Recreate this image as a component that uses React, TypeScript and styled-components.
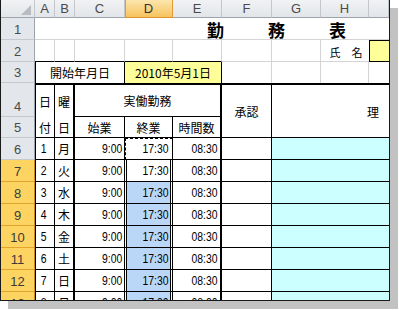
import React from 'react';
import styled, { createGlobalStyle, css } from 'styled-components';

const Global = createGlobalStyle`
  html, body { margin: 0; padding: 0; background: #fff; }
  body { width: 399px; height: 310px; overflow: hidden; font-family: "Noto Sans CJK JP", sans-serif; }
`;

const Frame = styled.div`
  width: 390px;
  height: 301px;
  box-sizing: border-box;
  border: 1px solid #1a1a1a;
  border-top: none;
  box-shadow: 8px 8px 0 #c2c2c2;
  overflow: hidden;
  background: #fff;
`;

const Sheet = styled.div`
  display: grid;
  grid-template-columns: 34px 20px 20px 50px 48px 49px 50px 49px 48px 20px;
  grid-template-rows: 18px 22px 22px 21px 34px 21px repeat(8, 22px);
`;

const Corner = styled.div`
  box-sizing: border-box;
  display: flex;
  align-items: flex-end;
  justify-content: flex-end;
  padding: 0 3px 2px 0;
  background: linear-gradient(#f1f2f4, #e2e5e9);
  border-right: 1px solid #c3c7cc;
  border-bottom: 1px solid #9da3aa;
`;

const CornerMark = styled.div`
  width: 0;
  height: 0;
  border-left: 10px solid transparent;
  border-bottom: 10px solid #b8bcc2;
`;

const ColHead = styled.div<{ $sel?: boolean }>`
  box-sizing: border-box;
  display: flex;
  align-items: center;
  justify-content: center;
  font: 13px "Liberation Sans", sans-serif;
  color: #4a4a4a;
  background: linear-gradient(#f1f2f4, #e2e5e9);
  border-right: 1px solid #c3c7cc;
  border-bottom: 1px solid #9da3aa;
  ${(p) =>
    p.$sel &&
    css`
      background: linear-gradient(#fce6ad, #f6c35e);
      border-right-color: #e39a36;
      border-bottom-color: #e0922a;
      box-shadow: inset 1px 0 0 #e39a36;
      color: #333;
    `}
`;

const RowHead = styled.div<{ $sel?: boolean }>`
  box-sizing: border-box;
  display: flex;
  align-items: flex-end;
  justify-content: center;
  padding-bottom: 3px;
  font: 13px "Liberation Sans", sans-serif;
  line-height: 13px;
  color: #4a4a4a;
  background: #e3e6ea;
  border-bottom: 1px solid #c5c9ce;
  border-right: 1px solid #9da3aa;
  ${(p) =>
    p.$sel &&
    css`
      background: #fdd462;
      border-bottom-color: #e2a42c;
      border-right-color: #c98d1c;
      color: #3a3a3a;
    `}
`;

type Edge = 'n' | 'g' | 't' | 'k';
const edge = (e?: Edge) =>
  e === 'g' ? '1px solid #d4d4d4' : e === 't' ? '1px solid #000' : e === 'k' ? '2px solid #000' : '0';

const Cell = styled.div<{
  $col?: string;
  $row?: string;
  $t?: Edge;
  $r?: Edge;
  $b?: Edge;
  $l?: Edge;
  $bg?: string;
  $h?: 'l' | 'c' | 'r';
}>`
  box-sizing: border-box;
  min-width: 0;
  overflow: hidden;
  display: flex;
  align-items: center;
  white-space: nowrap;
  grid-column: ${(p) => p.$col ?? 'auto'};
  grid-row: ${(p) => p.$row ?? 'auto'};
  justify-content: ${(p) => (p.$h === 'r' ? 'flex-end' : p.$h === 'l' ? 'flex-start' : 'center')};
  border-top: ${(p) => edge(p.$t)};
  border-right: ${(p) => edge(p.$r)};
  border-bottom: ${(p) => edge(p.$b)};
  border-left: ${(p) => edge(p.$l)};
  background: ${(p) => p.$bg ?? '#fff'};
  font: 12px "Noto Sans CJK JP", sans-serif;
  color: #000;
`;

const TitleCell = styled(Cell)`
  justify-content: flex-start;
  padding: 1px 0 0 172px;
  gap: 44px;
  font-size: 17px;
  font-weight: 700;
`;

const NameCell = styled(Cell)`
  align-items: flex-end;
  padding: 0 0 1px 2px;
  font-size: 11px;
`;

const NumCell = styled(Cell)`
  font-family: "Liberation Sans", sans-serif;
  font-size: 13px;
  padding-right: 2px;
`;

const Digits = styled.span<{ $origin?: string }>`
  display: inline-block;
  transform: scaleX(0.8);
  transform-origin: ${(p) => p.$origin ?? 'right center'};
`;

const TimeCell = styled(NumCell)<{ $mode?: 'ants' | 'active' | 'sel' }>`
  padding-right: 3px;
  ${(p) =>
    p.$mode === 'ants' &&
    css`
      outline: 1px dashed #000;
      outline-offset: -1px;
    `}
  ${(p) =>
    (p.$mode === 'active' || p.$mode === 'sel') &&
    css`
      box-shadow: inset 1px 0 0 #fff, inset 2px 0 0 #000, inset -1px 0 0 #fff, inset -2px 0 0 #000;
    `}
  ${(p) =>
    p.$mode === 'sel' &&
    css`
      background: #bad7f7;
    `}
`;

const ReasonCell = styled(Cell)`
  justify-content: flex-end;
  padding-right: 10px;
`;

const days = ['月', '火', '水', '木', '金', '土', '日', '月'];
const cols = ['A', 'B', 'C', 'D', 'E', 'F', 'G', 'H', ''];

export default function App() {
  return (
    <>
      <Global />
      <Frame>
        <Sheet>
          <Corner>
            <CornerMark />
          </Corner>
          {cols.map((c) => (
            <ColHead key={c || 'I'} $sel={c === 'D'}>
              {c}
            </ColHead>
          ))}

          <RowHead>1</RowHead>
          <TitleCell $col="2 / 11" $b="g">
            <span>勤</span>
            <span>務</span>
            <span>表</span>
          </TitleCell>

          <RowHead>2</RowHead>
          <Cell $r="g" $b="t" />
          <Cell $r="g" $b="t" />
          <Cell $r="g" $b="t" />
          <Cell $r="g" $b="t" />
          <Cell $r="g" $b="t" />
          <Cell $r="g" $b="g" />
          <Cell $r="g" $b="g" />
          <NameCell $b="g">氏　名</NameCell>
          <Cell $bg="#ffff99" $l="t" $t="t" $b="t" />

          <RowHead>3</RowHead>
          <Cell $col="2 / 5" $l="t" $r="t">開始年月日</Cell>
          <Cell $col="5 / 7" $r="t" $bg="#ffff99">2010年5月1日</Cell>
          <Cell $r="g" />
          <Cell $r="g" />
          <Cell $r="g" />
          <Cell />

          <RowHead>4</RowHead>
          <Cell $t="k" $l="t" $r="t">日</Cell>
          <Cell $t="k" $r="k">曜</Cell>
          <Cell $col="4 / 7" $t="k" $r="k" $b="t">実働勤務</Cell>
          <Cell $col="7 / 8" $row="5 / 7" $t="k" $r="t" $b="t">承認</Cell>
          <ReasonCell $col="8 / 11" $row="5 / 7" $t="k" $b="t">理</ReasonCell>

          <RowHead>5</RowHead>
          <Cell $col="2 / 3" $row="6" $l="t" $r="t" $b="t">付</Cell>
          <Cell $col="3 / 4" $row="6" $r="k" $b="t">日</Cell>
          <Cell $col="4 / 5" $row="6" $r="t" $b="t">始業</Cell>
          <Cell $col="5 / 6" $row="6" $r="t" $b="t">終業</Cell>
          <Cell $col="6 / 7" $row="6" $r="k" $b="t">時間数</Cell>

          {days.map((d, i) => (
            <React.Fragment key={i}>
              <RowHead $sel={i >= 1}>{i + 6}</RowHead>
              <NumCell $l="t" $r="t" $b="t" $h="c">
                <Digits $origin="center">{i + 1}</Digits>
              </NumCell>
              <Cell $r="k" $b="t">
                {d}
              </Cell>
              <NumCell $r="t" $b="t" $h="r">
                <Digits>9:00</Digits>
              </NumCell>
              <TimeCell $r="t" $b="t" $h="r" $mode={i === 0 ? 'ants' : i === 1 ? 'active' : 'sel'}>
                <Digits>17:30</Digits>
              </TimeCell>
              <NumCell $r="k" $b="t" $h="r">
                <Digits>08:30</Digits>
              </NumCell>
              <Cell $r="t" $b="t" />
              <Cell $col="8 / 11" $b="t" $bg="#ccffff" />
            </React.Fragment>
          ))}
        </Sheet>
      </Frame>
    </>
  );
}
